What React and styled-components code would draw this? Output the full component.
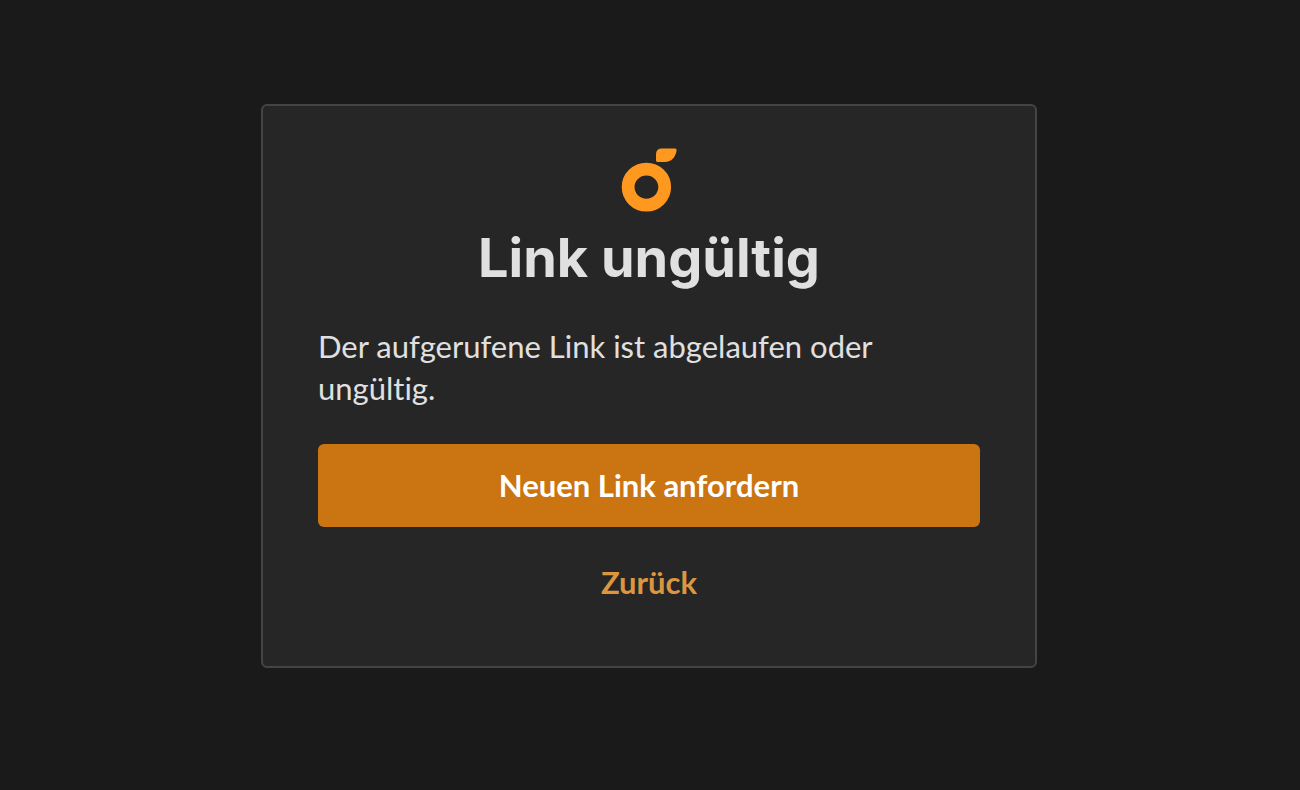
import React from "react";
import styled, { createGlobalStyle } from "styled-components";

const GlobalStyle = createGlobalStyle`
  * { box-sizing: border-box; }
  body {
    margin: 0;
    background: #1a1a1a;
    color: #e0e0e0;
    font-family: Lato, "Open Sans", sans-serif;
    font-variant-ligatures: none;
  }
`;

const Page = styled.main`
  min-height: 100vh;
  padding: 104px 26px 104px 24px;
  display: flex;
  justify-content: center;
  align-items: flex-start;
`;

const Card = styled.section`
  width: 100%;
  max-width: 776px;
  padding: 42px 55px 63px;
  display: flex;
  flex-direction: column;
  background: #262626;
  border: 2px solid #444444;
  border-radius: 6px;
`;

const Logo = styled.svg`
  width: 56px;
  height: 64px;
  align-self: center;
`;

const Title = styled.h1`
  margin: 10px 0 31px;
  font-family: Inter, "Open Sans", sans-serif;
  font-size: 54px;
  line-height: 72px;
  font-weight: 700;
  text-align: center;
`;

const Message = styled.p`
  margin: 0 0 35px;
  font-size: 31px;
  line-height: 42px;
`;

const Button = styled.button`
  height: 83px;
  padding: 0 24px 2px;
  border: 0;
  border-radius: 6px;
  background: #ca7512;
  color: #ffffff;
  font: inherit;
  font-size: 31px;
  font-weight: 700;
  cursor: pointer;
`;

const BackLink = styled.a`
  margin-top: 34px;
  align-self: center;
  color: #dc963f;
  font-size: 31px;
  line-height: 42px;
  font-weight: 700;
  text-decoration: none;
`;

export default function App() {
  return (
    <>
      <GlobalStyle />
      <Page>
        <Card>
          <Logo viewBox="0 0 56 64" aria-hidden="true">
            <ellipse cx="25.4" cy="39.1" rx="18.3" ry="18" fill="none" stroke="#ff981f" strokeWidth="12.8" />
            <path d="M35 12.6V6.5Q35 .6 41 .6H54Q56 .6 55.6 2.8C54.2 9.6 50.5 13.9 44 13.9H36.3Q35 13.9 35 12.6Z" fill="#ff981f" />
          </Logo>
          <Title>Link ungültig</Title>
          <Message>Der aufgerufene Link ist abgelaufen oder ungültig.</Message>
          <Button type="button">Neuen Link anfordern</Button>
          <BackLink href="#">Zurück</BackLink>
        </Card>
      </Page>
    </>
  );
}
